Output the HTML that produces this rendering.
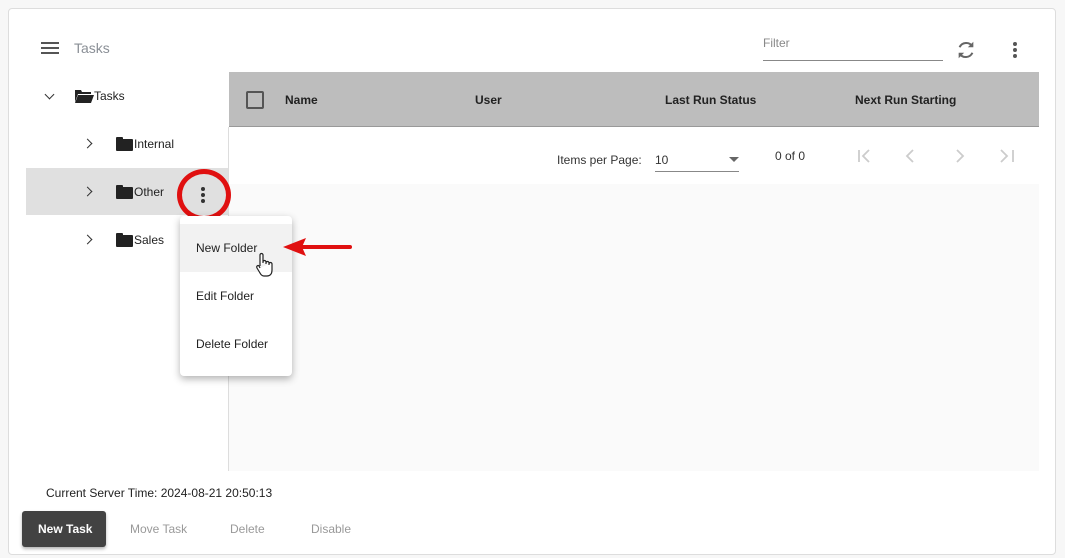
<!DOCTYPE html>
<html><head><style>
*{margin:0;padding:0;box-sizing:border-box}
body{width:1065px;height:558px;background:#f7f7f7;font-family:"Liberation Sans",Arial,sans-serif;position:relative;overflow:hidden;color:#222}
.a{position:absolute}
.card{left:8px;top:8px;width:1048px;height:547px;background:#fff;border:1px solid #ddd;border-radius:4px}
.t13{font-size:12px}
.hd{font-size:12px;font-weight:bold;color:#222}
.fold{width:17px;height:12px;background:#222;border-radius:1px}
.fold:before{content:"";position:absolute;left:0;top:-2px;width:7px;height:3px;background:#222;border-radius:1px 1px 0 0}
.btn{font-size:12px;color:#aaa;font-weight:bold}
.chev{width:7px;height:7px;border-right:1.6px solid #333;border-bottom:1.6px solid #333;transform:rotate(-45deg)}
</style></head><body>
<div class="a card"></div>
<div class="a" style="left:41px;top:42px;width:18px;height:2px;background:#555"></div>
<div class="a" style="left:41px;top:47px;width:18px;height:2px;background:#555"></div>
<div class="a" style="left:41px;top:52px;width:18px;height:2px;background:#555"></div>
<div class="a" style="left:74px;top:40px;font-size:14px;color:#8a8f96">Tasks</div>
<div class="a" style="left:763px;top:36px;font-size:12px;color:#888">Filter</div>
<div class="a" style="left:763px;top:60px;width:180px;height:1px;background:#888"></div>
<svg class="a" style="left:955px;top:39px" width="22" height="22" viewBox="0 0 24 24"><path d="M19 8a8 8 0 0 0-14 1M5 16a8 8 0 0 0 14-1" fill="none" stroke="#666" stroke-width="2.2"/><path d="M20 3v6h-6zM4 21v-6h6z" fill="#666"/></svg>
<div class="a" style="left:1013px;top:42px;width:4px;height:4px;border-radius:2px;background:#555;box-shadow:0 6px 0 #555,0 12px 0 #555"></div>
<div class="a" style="left:229px;top:72px;width:810px;height:55px;background:#bdbdbd;border-bottom:1px solid #999"></div>
<div class="a" style="left:246px;top:91px;width:18px;height:18px;border:2px solid #555;border-radius:2px"></div>
<div class="a hd" style="left:285px;top:93px">Name</div>
<div class="a hd" style="left:475px;top:93px">User</div>
<div class="a hd" style="left:665px;top:93px">Last Run Status</div>
<div class="a hd" style="left:855px;top:93px">Next Run Starting</div>
<div class="a t13" style="left:557px;top:153px;color:#333">Items per Page:</div>
<div class="a t13" style="left:655px;top:153px;color:#333">10</div>
<div class="a" style="left:729px;top:157px;border:5px solid transparent;border-top-color:#666"></div>
<div class="a" style="left:655px;top:171px;width:84px;height:1px;background:#888"></div>
<div class="a t13" style="left:775px;top:149px;color:#333">0 of 0</div>
<svg class="a" style="left:850px;top:145px" width="180" height="22" fill="none" stroke="#ccc" stroke-width="1.8">
<path d="M9 5v12M19 5l-6 6 6 6"/>
<path d="M63 5l-6 6 6 6"/>
<path d="M107 5l6 6-6 6"/>
<path d="M151 5l6 6-6 6M163 5v12"/>
</svg>
<div class="a" style="left:229px;top:184px;width:810px;height:287px;background:#fafafa"></div>
<div class="a" style="left:228px;top:127px;width:1px;height:344px;background:#ddd"></div>
<div class="a" style="left:26px;top:168px;width:202px;height:47px;background:#e0e0e0"></div>
<div class="a chev" style="left:46px;top:91px;transform:rotate(45deg)"></div>
<svg class="a" style="left:75px;top:89px" width="19" height="14" viewBox="0 0 19 14"><path d="M0 1h6l1 2h9v2H3L0 13z M3 6h16l-3 8H0z" fill="#222"/></svg>
<div class="a t13" style="left:94px;top:89px">Tasks</div>
<div class="a chev" style="left:84px;top:140px"></div>
<div class="a fold" style="left:116px;top:139px"></div>
<div class="a t13" style="left:134px;top:137px">Internal</div>
<div class="a chev" style="left:84px;top:188px"></div>
<div class="a fold" style="left:116px;top:187px"></div>
<div class="a t13" style="left:134px;top:185px">Other</div>
<div class="a chev" style="left:84px;top:236px"></div>
<div class="a fold" style="left:116px;top:235px"></div>
<div class="a t13" style="left:134px;top:233px">Sales</div>
<div class="a" style="left:201px;top:187px;width:4px;height:4px;border-radius:2px;background:#333;box-shadow:0 6px 0 #333,0 12px 0 #333"></div>
<div class="a" style="left:177px;top:169px;width:54px;height:52px;border:5px solid #e01010;border-radius:50%"></div>
<div class="a" style="left:180px;top:216px;width:112px;height:160px;background:#fff;border-radius:4px;box-shadow:0 3px 8px rgba(0,0,0,.3)"></div>
<div class="a" style="left:180px;top:224px;width:112px;height:48px;background:#f2f2f2"></div>
<div class="a t13" style="left:196px;top:241px">New Folder</div>
<div class="a t13" style="left:196px;top:289px">Edit Folder</div>
<div class="a t13" style="left:196px;top:337px">Delete Folder</div>
<svg class="a" style="left:255px;top:252px" width="20" height="26" viewBox="0 0 20 26"><path d="M5 14V3a1.5 1.5 0 0 1 3 0v8 M8 10a1.5 1.5 0 0 1 3 0v2M11 11a1.5 1.5 0 0 1 3 0v2M14 12a1.5 1.5 0 0 1 3 0v6c0 4-2 6-5 6H9c-2 0-3-1-4-3l-3-5c-1-2 1-3 2-2l1 2" fill="#fff" stroke="#222" stroke-width="1.2"/></svg>
<svg class="a" style="left:280px;top:236px" width="75" height="22"><path d="M22 11H70" stroke="#e01010" stroke-width="4" stroke-linecap="round"/><path d="M3 11L26 2L22 11L26 20z" fill="#e01010"/></svg>
<div class="a t13" style="left:46px;top:486px">Current Server Time: 2024-08-21 20:50:13</div>
<div class="a" style="left:22px;top:511px;width:84px;height:36px;background:#424242;border-radius:3px;box-shadow:0 2px 3px rgba(0,0,0,.3)"></div>
<div class="a btn" style="left:38px;top:522px;color:#fff">New Task</div>
<div class="a btn" style="left:130px;top:522px;font-weight:normal;color:#999">Move Task</div>
<div class="a btn" style="left:230px;top:522px;font-weight:normal;color:#999">Delete</div>
<div class="a btn" style="left:311px;top:522px;font-weight:normal;color:#999">Disable</div>
</body></html>
